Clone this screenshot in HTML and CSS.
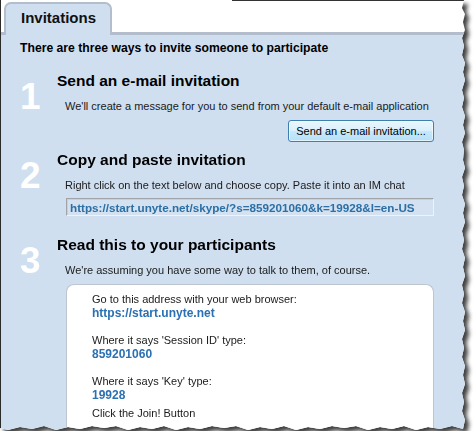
FILE: index.html
```html
<!DOCTYPE html>
<html>
  <head>
    <meta name="viewport" content="width=device-width, initial-scale=1" />
    <link rel="stylesheet" href="styles.css">
  </head>

  <body>
    <div class="shot">
      <div class="sheet">
        <div class="frame-line"></div>

        <div class="tabs">
          <div class="tab-gap"></div>
          <div class="tab">Invitations</div>
          <div class="tab-rest"></div>
        </div>

        <div class="panel">
          <div class="intro">There are three ways to invite someone to participate</div>

          <div class="step">
            <div class="num">1</div>
            <div class="step-body">
              <h2>Send an e-mail invitation</h2>
              <p class="desc">We'll create a message for you to send from your default e-mail application</p>
              <div class="actions">
                <button type="button" class="mail-btn">Send an e-mail invitation...</button>
              </div>
            </div>
          </div>

          <div class="step">
            <div class="num">2</div>
            <div class="step-body">
              <h2>Copy and paste invitation</h2>
              <p class="desc">Right click on the text below and choose copy. Paste it into an IM chat</p>
              <input class="invite-link" type="text" readonly value="https://start.unyte.net/skype/?s=859201060&amp;k=19928&amp;l=en-US" />
            </div>
          </div>

          <div class="step step-last">
            <div class="num">3</div>
            <div class="step-body">
              <h2>Read this to your participants</h2>
              <p class="desc">We're assuming you have some way to talk to them, of course.</p>
              <div class="read-box">
                <div class="group">
                  <p class="label">Go to this address with your web browser:</p>
                  <p class="value">https://start.unyte.net</p>
                </div>
                <div class="group">
                  <p class="label">Where it says 'Session ID' type:</p>
                  <p class="value">859201060</p>
                </div>
                <div class="group group-tight">
                  <p class="label">Where it says 'Key' type:</p>
                  <p class="value">19928</p>
                </div>
                <p class="label">Click the Join! Button</p>
              </div>
            </div>
          </div>
        </div>
      </div>
    </div>
  </body>
</html>
```

FILE: styles.css
```css
  body {
    margin: 0;
    background: #ffffff;
    font-family: "Liberation Sans", Arial, Helvetica, sans-serif;
  }

  .shot {
    width: 472px;
    filter: drop-shadow(4px 4px 2px rgba(0, 0, 0, 0.75));
  }

  .sheet {
    width: 466px;
    height: 431px;
    box-sizing: border-box;
    border-left: 1px solid #2b2b2b;
    background: #ffffff;
    display: flex;
    flex-direction: column;
    overflow: hidden;
    clip-path: polygon(
      0 0, 464px 0, 462px 8px, 465px 14px, 463px 22px, 465px 30px, 462px 38px,
      464px 46px, 462px 55px, 465px 63px, 463px 72px, 465px 80px, 462px 90px,
      464px 98px, 462px 107px, 465px 116px, 463px 125px, 465px 133px, 462px 142px,
      464px 150px, 463px 160px, 465px 168px, 462px 177px, 464px 186px, 462px 195px,
      465px 204px, 463px 213px, 465px 222px, 462px 231px, 464px 240px, 462px 249px,
      465px 258px, 463px 267px, 465px 276px, 462px 285px, 464px 294px, 462px 303px,
      465px 312px, 463px 321px, 465px 330px, 462px 339px, 464px 348px, 462px 357px,
      465px 366px, 463px 375px, 465px 384px, 462px 393px, 464px 402px, 462px 411px,
      465px 420px, 463px 429px,
      452px 426px, 440px 429px, 428px 427px, 416px 430px, 404px 426px, 392px 429px,
      380px 427px, 368px 430px, 356px 426px, 344px 428px, 332px 426px, 320px 429px,
      308px 427px, 296px 430px, 284px 426px, 272px 429px, 260px 427px, 248px 430px,
      236px 426px, 224px 428px, 212px 426px, 200px 429px, 188px 427px, 176px 430px,
      164px 426px, 152px 429px, 140px 427px, 128px 430px, 116px 426px, 104px 428px,
      92px 426px, 80px 429px, 68px 427px, 56px 430px, 44px 426px, 32px 429px,
      20px 427px, 8px 430px, 0 428px
    );
  }

  .frame-line {
    height: 1px;
    margin-left: 231px;
    width: 232px;
    background: #333333;
    flex: none;
  }

  .tabs {
    display: flex;
    align-items: flex-end;
    flex: none;
  }

  .tab-gap {
    width: 3px;
    border-bottom: 3px solid #b4bdcb;
  }

  .tab-rest {
    flex: 1;
    border-bottom: 3px solid #b4bdcb;
  }

  .tab {
    width: 108px;
    box-sizing: border-box;
    margin-top: 1px;
    padding: 4px 0 7px 15px;
    line-height: 20px;
    font-size: 15px;
    font-weight: bold;
    color: #111111;
    background: #cfdff0;
    border: 2px solid #b4bdcb;
    border-bottom: none;
    border-radius: 7px 7px 0 0;
  }

  .panel {
    flex: 1;
    background: #cfdff0;
    padding: 6px 32px 0 19px;
  }

  .intro {
    font-size: 12.2px;
    font-weight: bold;
    line-height: 14px;
    color: #000000;
  }

  .step {
    display: grid;
    grid-template-columns: 37px 1fr;
    margin-top: 17px;
  }

  .step + .step {
    margin-top: 9px;
  }

  .step-last {
    margin-top: 20px !important;
  }

  .num {
    margin-top: 6px;
    font-size: 37px;
    line-height: 37px;
    font-weight: bold;
    color: #ffffff;
  }

  .step-body h2 {
    margin: 0;
    font-size: 15.5px;
    line-height: 18px;
    font-weight: bold;
    color: #000000;
  }

  .desc {
    margin: 9px 0 0 8px;
    font-size: 11px;
    line-height: 14px;
    color: #1a1a1a;
  }

  .actions {
    display: flex;
    justify-content: flex-end;
    margin-top: 7px;
  }

  .mail-btn {
    width: 146px;
    height: 22px;
    padding: 0;
    font-family: "Liberation Sans", Arial, sans-serif;
    font-size: 11px;
    color: #000000;
    border: 1px solid #3c7fb1;
    border-radius: 3px;
    background: linear-gradient(#eaf6fd, #d9f0fc 50%, #c6e8fb 52%, #b5e0f8);
    box-shadow: inset 0 0 0 1px rgba(255, 255, 255, 0.6);
    cursor: pointer;
  }

  .invite-link {
    display: block;
    width: calc(100% - 9px);
    height: 18px;
    margin: 6px 0 0 9px;
    padding: 0 0 0 3px;
    box-sizing: border-box;
    font-family: "Liberation Sans", Arial, sans-serif;
    font-size: 11.7px;
    font-weight: bold;
    color: #2c6fa5;
    background: #d3e1f0;
    border: 1px solid;
    border-color: #a0a4a8 #eef3f8 #eef3f8 #a0a4a8;
    box-shadow: inset 1px 1px 0 #c9d0d8;
    outline: none;
  }

  .read-box {
    margin: 7px 0 0 9px;
    padding: 7px 10px 40px 25px;
    background: #ffffff;
    border: 1px solid #bcc5d0;
    border-bottom: none;
    border-radius: 8px 8px 0 0;
  }

  .read-box p {
    margin: 0;
  }

  .group {
    margin-bottom: 12px;
  }

  .group-tight {
    margin-bottom: 3px;
  }

  .label {
    font-size: 11px;
    line-height: 14px;
    color: #1a1a1a;
  }

  .value {
    font-size: 12px;
    line-height: 15px;
    font-weight: bold;
    color: #2a70b3;
  }
```
